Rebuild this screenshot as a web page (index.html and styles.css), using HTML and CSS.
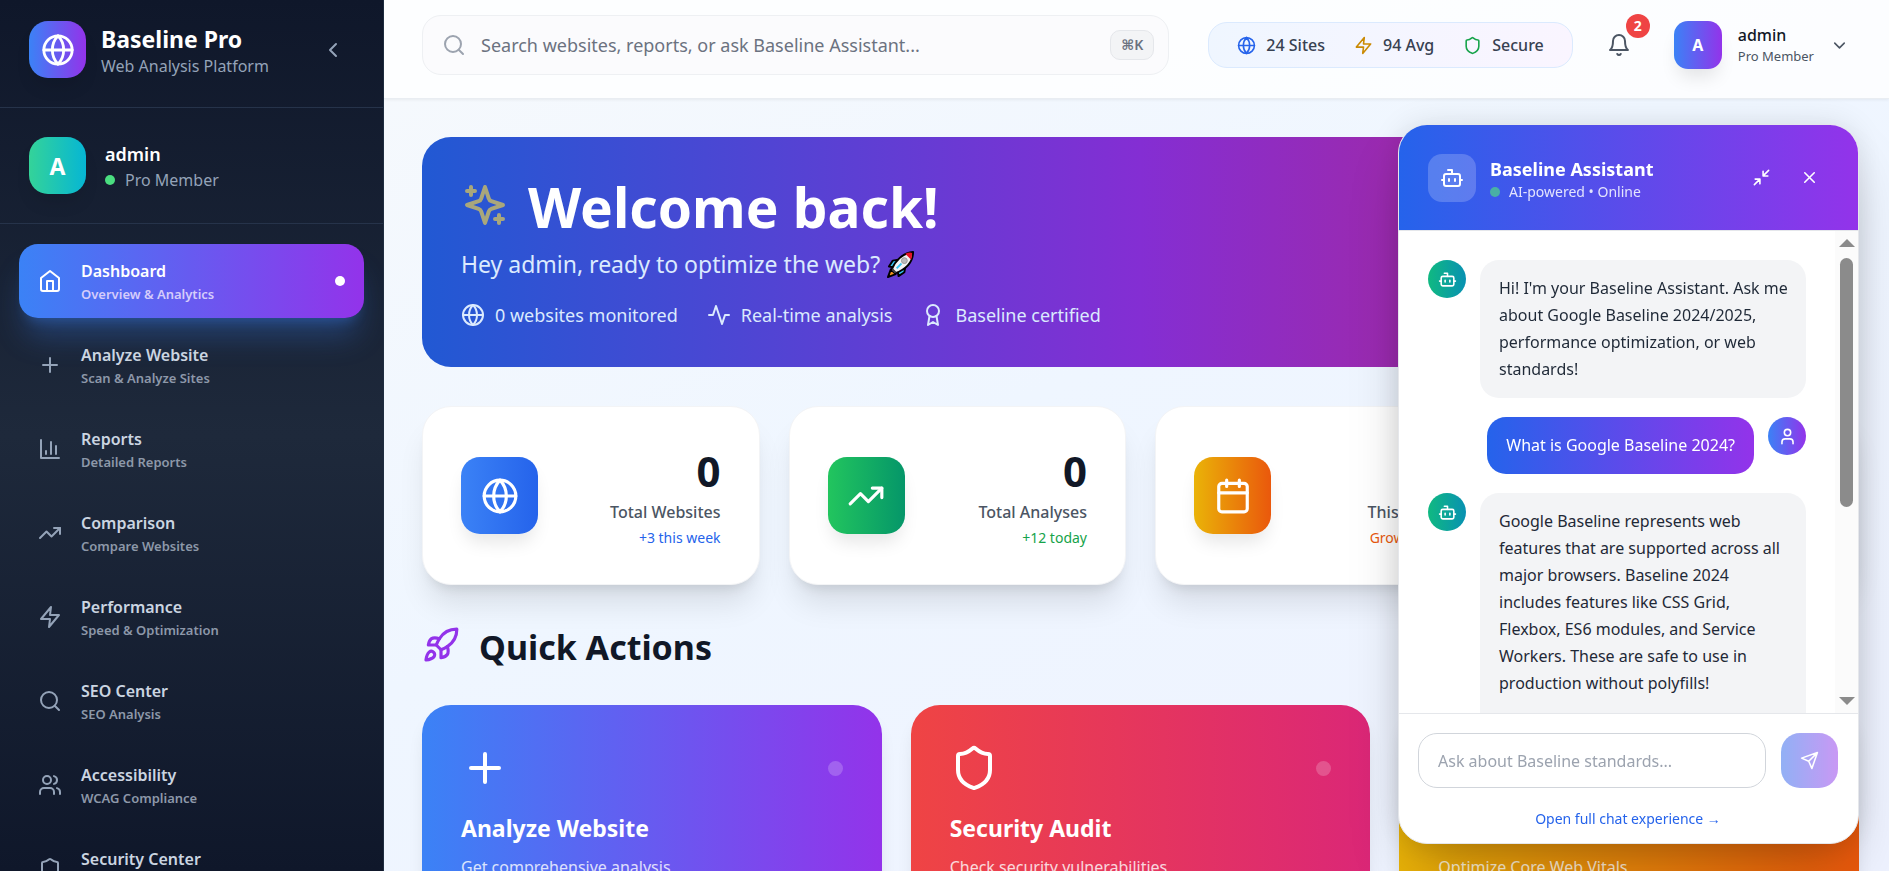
FILE: index.html
```
<!DOCTYPE html>
<html lang="en">
<head>
    <meta charset="UTF-8">
    <meta name="viewport" content="width=device-width, initial-scale=1.0">
    <title>Baseline Pro</title>
    <link rel="stylesheet" href="styles.css">
</head>
<body>
    <!-- icon set -->
    <svg class="sprite" aria-hidden="true">
        <symbol id="globe" viewBox="0 0 24 24"><circle cx="12" cy="12" r="10"/><path d="M12 2a14.5 14.5 0 0 0 0 20 14.5 14.5 0 0 0 0-20M2 12h20"/></symbol>
        <symbol id="home" viewBox="0 0 24 24"><path d="m3 9 9-7 9 7v11a2 2 0 0 1-2 2H5a2 2 0 0 1-2-2z"/><path d="M9 22V12h6v10"/></symbol>
        <symbol id="plus" viewBox="0 0 24 24"><path d="M5 12h14M12 5v14"/></symbol>
        <symbol id="chart" viewBox="0 0 24 24"><path d="M3 3v18h18M18 17V9M13 17V5M8 17v-3"/></symbol>
        <symbol id="trend" viewBox="0 0 24 24"><path d="m22 7-8.500 8.500-5-5L2 17"/><path d="M16 7h6v6"/></symbol>
        <symbol id="zap" viewBox="0 0 24 24"><path d="M13 2 3 14h9l-1 8 10-12h-9l1-8z"/></symbol>
        <symbol id="search" viewBox="0 0 24 24"><circle cx="11" cy="11" r="8"/><path d="m21 21-4.300-4.300"/></symbol>
        <symbol id="users" viewBox="0 0 24 24"><path d="M16 21v-2a4 4 0 0 0-4-4H6a4 4 0 0 0-4 4v2"/><circle cx="9" cy="7" r="4"/><path d="M22 21v-2a4 4 0 0 0-3-3.870M16 3.130a4 4 0 0 1 0 7.750"/></symbol>
        <symbol id="shield" viewBox="0 0 24 24"><path d="M20 13c0 5-3.500 7.500-7.660 8.950a1 1 0 0 1-.670-.010C7.500 20.500 4 18 4 13V6a1 1 0 0 1 1-1c2 0 4.500-1.200 6.240-2.720a1.170 1.170 0 0 1 1.520 0C14.510 3.810 17 5 19 5a1 1 0 0 1 1 1z"/></symbol>
        <symbol id="sparkles" viewBox="0 0 24 24"><path d="m12 3-1.912 5.813a2 2 0 0 1-1.275 1.275L3 12l5.813 1.912a2 2 0 0 1 1.275 1.275L12 21l1.912-5.813a2 2 0 0 1 1.275-1.275L21 12l-5.813-1.912a2 2 0 0 1-1.275-1.275L12 3Z"/><path d="M5 3v4M19 17v4M3 5h4M17 19h4"/></symbol>
        <symbol id="activity" viewBox="0 0 24 24"><path d="M22 12h-4l-3 9L9 3l-3 9H2"/></symbol>
        <symbol id="award" viewBox="0 0 24 24"><circle cx="12" cy="8" r="6"/><path d="M15.477 12.890 17 22l-5-3-5 3 1.523-9.110"/></symbol>
        <symbol id="calendar" viewBox="0 0 24 24"><rect x="3" y="4" width="18" height="18" rx="2"/><path d="M16 2v4M8 2v4M3 10h18"/></symbol>
        <symbol id="rocket" viewBox="0 0 24 24"><path d="M4.500 16.500c-1.500 1.260-2 5-2 5s3.740-.500 5-2c.710-.840.700-2.130-.090-2.910a2.180 2.180 0 0 0-2.910-.090z"/><path d="m12 15-3-3a22 22 0 0 1 2-3.950A12.880 12.880 0 0 1 22 2c0 2.720-.780 7.500-6 11a22.350 22.350 0 0 1-4 2z"/><path d="M9 12H4s.550-3.030 2-4c1.620-1.080 5 0 5 0M12 15v5s3.030-.550 4-2c1.080-1.620 0-5 0-5"/></symbol>
        <symbol id="bell" viewBox="0 0 24 24"><path d="M6 8a6 6 0 0 1 12 0c0 7 3 9 3 9H3s3-2 3-9M10.300 21a1.940 1.940 0 0 0 3.400 0"/></symbol>
        <symbol id="bot" viewBox="0 0 24 24"><path d="M12 8V4H8"/><rect x="4" y="8" width="16" height="12" rx="2"/><path d="M2 14h2M20 14h2M15 13v2M9 13v2"/></symbol>
        <symbol id="minimize" viewBox="0 0 24 24"><path d="M4 14h6v6M20 10h-6V4M14 10l7-7M3 21l7-7"/></symbol>
        <symbol id="close" viewBox="0 0 24 24"><path d="M18 6 6 18M6 6l12 12"/></symbol>
        <symbol id="send" viewBox="0 0 24 24"><path d="m22 2-7 20-4-9-9-4ZM22 2 11 13"/></symbol>
        <symbol id="user" viewBox="0 0 24 24"><path d="M19 21v-2a4 4 0 0 0-4-4H9a4 4 0 0 0-4 4v2"/><circle cx="12" cy="7" r="4"/></symbol>
        <symbol id="left" viewBox="0 0 24 24"><path d="m15 18-6-6 6-6"/></symbol>
        <symbol id="down" viewBox="0 0 24 24"><path d="m6 9 6 6 6-6"/></symbol>
    </svg>

    <aside class="sidebar">
        <div class="brand">
            <div class="tile tile-brand"><svg class="icon icon-lg"><use href="#globe"/></svg></div>
            <div class="brand-text">
                <h1>Baseline Pro</h1>
                <p>Web Analysis Platform</p>
            </div>
            <button class="collapse" aria-label="Collapse sidebar"><svg class="icon"><use href="#left"/></svg></button>
        </div>
        <div class="member">
            <div class="tile tile-member">A</div>
            <div>
                <p class="member-name">admin</p>
                <p class="member-role"><span class="dot"></span>Pro Member</p>
            </div>
        </div>
        <nav class="menu">
            <a href="#" class="active">
                <svg class="icon"><use href="#home"/></svg>
                <span class="menu-text"><b>Dashboard</b><small>Overview &amp; Analytics</small></span>
                <span class="dot"></span>
            </a>
            <a href="#">
                <svg class="icon"><use href="#plus"/></svg>
                <span class="menu-text"><b>Analyze Website</b><small>Scan &amp; Analyze Sites</small></span>
            </a>
            <a href="#">
                <svg class="icon"><use href="#chart"/></svg>
                <span class="menu-text"><b>Reports</b><small>Detailed Reports</small></span>
            </a>
            <a href="#">
                <svg class="icon"><use href="#trend"/></svg>
                <span class="menu-text"><b>Comparison</b><small>Compare Websites</small></span>
            </a>
            <a href="#">
                <svg class="icon"><use href="#zap"/></svg>
                <span class="menu-text"><b>Performance</b><small>Speed &amp; Optimization</small></span>
            </a>
            <a href="#">
                <svg class="icon"><use href="#search"/></svg>
                <span class="menu-text"><b>SEO Center</b><small>SEO Analysis</small></span>
            </a>
            <a href="#">
                <svg class="icon"><use href="#users"/></svg>
                <span class="menu-text"><b>Accessibility</b><small>WCAG Compliance</small></span>
            </a>
            <a href="#">
                <svg class="icon"><use href="#shield"/></svg>
                <span class="menu-text"><b>Security Center</b><small>Security Analysis</small></span>
            </a>
        </nav>
    </aside>

    <div class="page">
        <header class="topbar">
            <label class="search">
                <svg class="icon"><use href="#search"/></svg>
                <input type="text" aria-label="Search" placeholder="Search websites, reports, or ask Baseline Assistant...">
                <kbd>⌘K</kbd>
            </label>
            <div class="summary">
                <span><svg class="icon icon-sm blue"><use href="#globe"/></svg>24 Sites</span>
                <span><svg class="icon icon-sm yellow"><use href="#zap"/></svg>94 Avg</span>
                <span><svg class="icon icon-sm green"><use href="#shield"/></svg>Secure</span>
            </div>
            <button class="bell" aria-label="Notifications">
                <svg class="icon"><use href="#bell"/></svg>
                <span class="badge">2</span>
            </button>
            <button class="account">
                <span class="avatar">A</span>
                <span class="account-text"><b>admin</b><small>Pro Member</small></span>
                <svg class="icon icon-sm"><use href="#down"/></svg>
            </button>
        </header>

        <main>
            <section class="hero">
                <h2><svg class="icon icon-xl"><use href="#sparkles"/></svg>Welcome back!</h2>
                <p class="hero-sub">Hey admin, ready to optimize the web?
                    <svg class="emoji" viewBox="0 0 30 30" role="img" aria-label="rocket">
                        <path d="M13 10 7 11 3 17l6 1zM20 17l-1 6-6 4-1-6z" fill="#38c8f4" stroke="#000" stroke-width="2" stroke-linejoin="round"/>
                        <path d="M5 20 2 28l8-3z" fill="#f7941d" stroke="#000" stroke-width="2" stroke-linejoin="round"/>
                        <path d="M6 20C9 12 17 3 28 2c0 11-8 18-18 22z" fill="#f4f4f4" stroke="#000" stroke-width="2" stroke-linejoin="round"/>
                        <path d="M20 4q4-2 7-1 0 4-1 7z" fill="#e81224"/>
                        <path d="m7 19 4 4-2 1-3-3z" fill="#444"/>
                        <path d="m11 19 5-5" stroke="#38c8f4" stroke-width="2"/>
                        <circle cx="19" cy="11" r="3" fill="#bbb" stroke="#999"/>
                    </svg>
                </p>
                <ul>
                    <li><svg class="icon"><use href="#globe"/></svg>0 websites monitored</li>
                    <li><svg class="icon"><use href="#activity"/></svg>Real-time analysis</li>
                    <li><svg class="icon"><use href="#award"/></svg>Baseline certified</li>
                </ul>
            </section>

            <section class="stats">
                <div class="stat">
                    <div class="stat-icon bg-blue"><svg class="icon icon-md"><use href="#globe"/></svg></div>
                    <div class="stat-text"><strong>0</strong><p>Total Websites</p><small class="blue">+3 this week</small></div>
                </div>
                <div class="stat">
                    <div class="stat-icon bg-green"><svg class="icon icon-md"><use href="#trend"/></svg></div>
                    <div class="stat-text"><strong>0</strong><p>Total Analyses</p><small class="green">+12 today</small></div>
                </div>
                <div class="stat">
                    <div class="stat-icon bg-orange"><svg class="icon icon-md"><use href="#calendar"/></svg></div>
                    <div class="stat-text"><strong>0</strong><p>This Month</p><small class="orange">Growing fast</small></div>
                </div>
                <div class="stat">
                    <div class="stat-icon bg-purple"><svg class="icon icon-md"><use href="#award"/></svg></div>
                    <div class="stat-text"><strong>0</strong><p>Avg Score</p><small class="purple">Excellent</small></div>
                </div>
            </section>

            <h2 class="section-title"><svg class="icon icon-md"><use href="#rocket"/></svg>Quick Actions</h2>

            <section class="actions">
                <a href="#" class="action bg-analyze">
                    <span class="action-top"><svg class="icon icon-xl"><use href="#plus"/></svg><span class="pulse"></span></span>
                    <h3>Analyze Website</h3>
                    <p>Get comprehensive analysis</p>
                </a>
                <a href="#" class="action bg-security">
                    <span class="action-top"><svg class="icon icon-xl"><use href="#shield"/></svg><span class="pulse"></span></span>
                    <h3>Security Audit</h3>
                    <p>Check security vulnerabilities</p>
                </a>
                <a href="#" class="action bg-orange">
                    <span class="action-top"><svg class="icon icon-xl"><use href="#zap"/></svg><span class="pulse"></span></span>
                    <h3>Performance</h3>
                    <p>Optimize Core Web Vitals</p>
                </a>
            </section>
        </main>
    </div>

    <section class="chat">
        <header class="chat-head">
            <div class="chat-logo"><svg class="icon"><use href="#bot"/></svg></div>
            <div class="chat-title">
                <h3>Baseline Assistant</h3>
                <p><span class="dot"></span>AI-powered • Online</p>
            </div>
            <button aria-label="Minimize"><svg class="icon icon-sm"><use href="#minimize"/></svg></button>
            <button aria-label="Close"><svg class="icon icon-sm"><use href="#close"/></svg></button>
        </header>
        <div class="chat-body">
            <div class="messages">
                <div class="message">
                    <span class="face face-bot"><svg class="icon icon-sm"><use href="#bot"/></svg></span>
                    <p class="bubble">Hi! I'm your Baseline Assistant. Ask me about Google Baseline 2024/2025, performance optimization, or web standards!</p>
                </div>
                <div class="message mine">
                    <p class="bubble">What is Google Baseline 2024?</p>
                    <span class="face face-user"><svg class="icon icon-sm"><use href="#user"/></svg></span>
                </div>
                <div class="message">
                    <span class="face face-bot"><svg class="icon icon-sm"><use href="#bot"/></svg></span>
                    <p class="bubble">Google Baseline represents web features that are supported across all major browsers. Baseline 2024 includes features like CSS Grid, Flexbox, ES6 modules, and Service Workers. These are safe to use in production without polyfills!<br><br></p>
                </div>
            </div>
            <div class="scrollbar" aria-hidden="true">
                <span class="arrow-up"></span>
                <span class="track"><span class="thumb"></span></span>
                <span class="arrow-down"></span>
            </div>
        </div>
        <footer class="chat-foot">
            <form>
                <input type="text" aria-label="Message" placeholder="Ask about Baseline standards...">
                <button type="button" aria-label="Send"><svg class="icon icon-sm"><use href="#send"/></svg></button>
            </form>
            <a href="#">Open full chat experience →</a>
        </footer>
    </section>
</body>
</html>
```
FILE: styles.css
```
* {
    box-sizing: border-box;
    margin: 0;
    padding: 0;
}

body {
    display: flex;
    height: 100vh;
    overflow: hidden;
    font-family: "Noto Sans", "Open Sans", sans-serif;
    font-size: 16px;
    line-height: 24px;
    color: #111827;
    background: linear-gradient(to bottom right, #f8fafc, #eff6ff, #eef2ff);
}

button, input {
    font: inherit;
    color: inherit;
    border: 0;
    background: none;
}

a {
    color: inherit;
    text-decoration: none;
}

ul {
    list-style: none;
}

.sprite {
    position: absolute;
    width: 0;
    height: 0;
}

.icon {
    flex: none;
    width: 24px;
    height: 24px;
    fill: none;
    stroke: currentColor;
    stroke-width: 2;
    stroke-linecap: round;
    stroke-linejoin: round;
}

.icon-sm {
    width: 19px;
    height: 19px;
}

.icon-lg {
    width: 34px;
    height: 34px;
}

.icon-md {
    width: 38px;
    height: 38px;
}

.icon-xl {
    width: 48px;
    height: 48px;
}

.dot {
    flex: none;
    width: 10px;
    height: 10px;
    border-radius: 50%;
    background: #4ade80;
}

.blue { color: #2563eb; }
.green { color: #16a34a; }
.yellow { color: #ca8a04; }
.orange { color: #ea580c; }
.purple { color: #9333ea; }

.bg-blue { background: linear-gradient(to right, #3b82f6, #2563eb); }
.bg-green { background: linear-gradient(to right, #22c55e, #059669); }
.bg-orange { background: linear-gradient(to right, #eab308, #ea580c); }
.bg-purple { background: linear-gradient(to right, #a855f7, #db2777); }
.bg-analyze { background: linear-gradient(to right, #3b82f6, #9333ea); }
.bg-security { background: linear-gradient(to right, #ef4444, #db2777); }

/* sidebar */
.sidebar {
    flex: none;
    width: 384px;
    overflow: hidden;
    border-right: 1px solid #1f2d40;
    background: linear-gradient(to bottom, #0f172a, #1e293b, #0f172a);
    color: #fff;
}

.brand {
    display: flex;
    align-items: center;
    gap: 15px;
    padding: 21px 38px 29px 29px;
    border-bottom: 1px solid #26334a;
}

.tile {
    display: flex;
    align-items: center;
    justify-content: center;
    width: 57px;
    height: 57px;
    border-radius: 19px;
    font-size: 23px;
    font-weight: 700;
    box-shadow: 0 12px 18px -4px rgba(0, 0, 0, 0.1);
}

.tile-brand {
    background: linear-gradient(to right, #3b82f6, #9333ea);
}

.tile-member {
    background: linear-gradient(to right, #34d399, #06b6d4);
}

.brand-text {
    flex: 1;
    padding-top: 2px;
}

.brand h1 {
    font-size: 23px;
    line-height: 30px;
}

.brand p,
.member-role {
    color: #94a3b8;
}

.collapse {
    display: flex;
    color: #94a3b8;
}

.member {
    display: flex;
    align-items: center;
    gap: 19px;
    padding: 29px;
    border-bottom: 1px solid #26334a;
}

.member-name {
    font-size: 18px;
    font-weight: 600;
    line-height: 28px;
}

.member-role {
    display: flex;
    align-items: center;
    gap: 10px;
}

.menu {
    display: flex;
    flex-direction: column;
    gap: 10px;
    padding: 20px 19px;
}

.menu a {
    display: flex;
    align-items: center;
    gap: 19px;
    height: 74px;
    padding: 0 19px;
    border-radius: 19px;
    color: #94a3b8;
}

.menu-text {
    flex: 1;
    padding-top: 2px;
}

.menu b {
    display: block;
    color: #cbd5e1;
    font-weight: 600;
}

.menu small {
    display: block;
    font-size: 13px;
    font-weight: 600;
    line-height: 22px;
    color: #8d98a9;
}

.menu .active {
    background: linear-gradient(to right, #3b82f6, #9333ea);
    box-shadow: 0 24px 30px -6px rgba(59, 130, 246, 0.3), 0 10px 12px -7px rgba(59, 130, 246, 0.3);
    color: #fff;
}

.menu .active b {
    color: #fff;
}

.menu .active small {
    color: #d5ccfb;
}

.menu .active .dot {
    background: #fff;
}

/* top bar */
.page {
    flex: 1;
    min-width: 0;
}

.topbar {
    display: flex;
    align-items: center;
    padding: 15px 40px 23px 38px;
    border-bottom: 1px solid #e9edf2;
    background: rgba(255, 255, 255, 0.8);
    box-shadow: 0 1px 3px rgba(0, 0, 0, 0.06);
}

.search {
    flex: 1;
    display: flex;
    align-items: center;
    gap: 15px;
    height: 60px;
    padding: 0 14px 0 19px;
    border: 1px solid #eef0f3;
    border-radius: 19px;
    background: #fbfbfd;
    color: #9ca3af;
}

.search input {
    flex: 1;
    min-width: 0;
    font-size: 18px;
    outline: none;
}

.search input::placeholder {
    color: #6b7280;
}

kbd {
    padding: 2px 10px;
    border: 1px solid #e5e7eb;
    border-radius: 10px;
    background: #f3f4f6;
    color: #6b7280;
    font-family: "Noto Sans", "DejaVu Sans", sans-serif;
    font-size: 14px;
    font-weight: 600;
}

.summary {
    display: flex;
    gap: 29px;
    margin-left: 39px;
    padding: 10px 28px;
    border: 1px solid #dbeafe;
    border-radius: 19px;
    background: linear-gradient(to right, #eff6ff, #faf5ff);
    color: #374151;
    font-weight: 500;
}

.summary span {
    display: flex;
    align-items: center;
    gap: 10px;
}

.bell {
    position: relative;
    display: flex;
    margin: 0 43px 0 34px;
    color: #4b5563;
}

.badge {
    position: absolute;
    top: -19px;
    right: -19px;
    width: 24px;
    height: 24px;
    border-radius: 50%;
    background: #ef4444;
    color: #fff;
    font-size: 14px;
    font-weight: 700;
}

.account {
    display: flex;
    align-items: center;
    gap: 16px;
    text-align: left;
    color: #4b5563;
}

.avatar {
    display: flex;
    align-items: center;
    justify-content: center;
    width: 48px;
    height: 48px;
    border-radius: 14px;
    background: linear-gradient(to right, #3b82f6, #9333ea);
    box-shadow: 0 12px 18px -4px rgba(0, 0, 0, 0.1);
    color: #fff;
    font-weight: 700;
}

.account b {
    display: block;
    color: #111827;
    font-weight: 500;
    line-height: 22px;
}

.account small {
    display: block;
    font-size: 13px;
    line-height: 20px;
}

/* main */
main {
    padding: 38px 30px 38px 38px;
}

.hero {
    height: 230px;
    padding: 38px 39px;
    border-radius: 29px;
    background: linear-gradient(to right, #2159d3, #842ed3, #c5236b);
    color: #dbeafe;
}

.hero h2 {
    display: flex;
    align-items: center;
    gap: 19px;
    font-size: 55px;
    line-height: 64px;
    color: #fff;
}

.hero h2 .icon,
.section-title .icon {
    margin-bottom: 5px;
}

.hero h2 .icon {
    color: #a9a77c;
}

.hero-sub {
    display: flex;
    align-items: center;
    gap: 6px;
    margin-top: 8px;
    font-size: 23px;
    line-height: 34px;
}

.emoji {
    width: 29px;
    height: 29px;
}

.hero ul {
    display: flex;
    gap: 29px;
    margin-top: 22px;
    font-size: 18px;
}

.hero li {
    display: flex;
    align-items: center;
    gap: 10px;
}

.stats {
    display: grid;
    grid-template-columns: repeat(4, 1fr);
    gap: 29px;
    margin-top: 39px;
}

.stat {
    display: flex;
    align-items: center;
    justify-content: space-between;
    height: 179px;
    padding: 0 38px;
    border: 1px solid #f3f4f6;
    border-radius: 29px;
    background: #fff;
    box-shadow: 0 24px 30px -6px rgba(0, 0, 0, 0.1), 0 10px 12px -7px rgba(0, 0, 0, 0.1);
}

.stat-icon {
    display: flex;
    align-items: center;
    justify-content: center;
    width: 77px;
    height: 77px;
    border-radius: 19px;
    color: #fff;
    box-shadow: 0 12px 18px -4px rgba(0, 0, 0, 0.1);
}

.stat-text {
    padding-top: 5px;
    text-align: right;
}

.stat strong {
    display: block;
    font-size: 42px;
    line-height: 50px;
}

.stat p {
    margin-top: 3px;
    color: #4b5563;
    font-weight: 500;
    line-height: 26px;
}

.stat small {
    display: block;
    font-size: 14px;
    line-height: 26px;
}

.section-title {
    display: flex;
    align-items: center;
    gap: 19px;
    margin: 38px 0 34px;
    font-size: 34px;
    line-height: 48px;
}

.section-title .icon {
    color: #9333ea;
}

.actions {
    display: grid;
    grid-template-columns: repeat(3, 1fr);
    gap: 29px;
}

.action {
    padding: 39px;
    border-radius: 29px;
    color: #fff;
    box-shadow: 0 12px 18px -4px rgba(0, 0, 0, 0.1);
}

.action-top {
    display: flex;
    align-items: center;
    justify-content: space-between;
}

.pulse {
    width: 15px;
    height: 15px;
    border-radius: 50%;
    background: rgba(255, 255, 255, 0.2);
}

.action h3 {
    margin-top: 19px;
    font-size: 23px;
    line-height: 34px;
}

.action p {
    margin-top: 10px;
    opacity: 0.8;
}

/* assistant window */
.chat {
    position: fixed;
    right: 30px;
    bottom: 27px;
    display: flex;
    flex-direction: column;
    width: 461px;
    height: 720px;
    border: 1px solid #e5e7eb;
    border-radius: 29px;
    background: #fff;
    box-shadow: 0 30px 60px -14px rgba(0, 0, 0, 0.25), 0 0 30px rgba(0, 0, 0, 0.1);
    overflow: hidden;
}

.chat-head {
    display: flex;
    align-items: center;
    gap: 14px;
    height: 106px;
    padding: 0 39px 0 29px;
    background: linear-gradient(to right, #2563eb, #9333ea);
    border-bottom: 1px solid #e5e7eb;
    color: #fff;
}

.chat-logo {
    display: flex;
    align-items: center;
    justify-content: center;
    width: 48px;
    height: 48px;
    border-radius: 14px;
    background: rgba(255, 255, 255, 0.2);
}

.chat-title {
    flex: 1;
    padding-top: 4px;
}

.chat-head h3 {
    font-size: 18px;
}

.chat-head p {
    display: flex;
    align-items: center;
    gap: 9px;
    font-size: 14px;
    line-height: 22px;
    color: #e3e4fd;
}

.chat-head .dot {
    background: #49b0a5;
}

.chat-head button {
    display: flex;
}

.chat-head button + button {
    margin-left: 15px;
}

.chat-body {
    flex: 1;
    display: flex;
    min-height: 0;
}

.messages {
    flex: 1;
    padding: 29px;
    overflow: hidden;
}

.message {
    display: flex;
    align-items: flex-start;
    gap: 14px;
    margin-bottom: 19px;
}

.face {
    flex: none;
    display: flex;
    align-items: center;
    justify-content: center;
    width: 38px;
    height: 38px;
    border-radius: 50%;
    color: #fff;
}

.face-bot {
    background: linear-gradient(to right, #10b981, #0891b2);
}

.face-user {
    background: linear-gradient(to right, #3b82f6, #9333ea);
}

.bubble {
    padding: 15px 14px 15px 19px;
    border-radius: 19px;
    background: #f3f4f6;
    color: #1f2937;
    line-height: 27px;
}

.mine {
    justify-content: flex-end;
}

.mine .bubble {
    padding-right: 19px;
    background: linear-gradient(to right, #2563eb, #9333ea);
    color: #fff;
}

.scrollbar {
    display: flex;
    flex-direction: column;
    align-items: center;
    width: 23px;
    padding: 8px 0;
    background: #fbfbfb;
}

.track {
    flex: 1;
    padding: 11px 0;
}

.thumb {
    display: block;
    width: 13px;
    height: 249px;
    border-radius: 7px;
    background: #8b8b8b;
}

.arrow-up,
.arrow-down {
    border: 8px solid transparent;
    border-top-width: 0;
    border-bottom-color: #8b8b8b;
}

.arrow-down {
    border-top: 8px solid #8b8b8b;
    border-bottom-width: 0;
}

.chat-foot {
    padding: 19px 20px 12px 19px;
    border-top: 1px solid #e5e7eb;
    text-align: center;
}

.chat-foot form {
    display: flex;
    gap: 15px;
    margin-bottom: 19px;
}

.chat-foot input {
    flex: 1;
    height: 55px;
    padding: 0 19px;
    border: 1px solid #d1d5db;
    border-radius: 19px;
}

.chat-foot input::placeholder {
    color: #9ca3af;
}

.chat-foot button {
    display: flex;
    align-items: center;
    justify-content: center;
    width: 57px;
    border-radius: 19px;
    background: linear-gradient(to right, #2563eb, #9333ea);
    color: #fff;
    opacity: 0.5;
}

.chat-foot a {
    display: block;
    font-size: 14px;
    color: #2563eb;
}
```
